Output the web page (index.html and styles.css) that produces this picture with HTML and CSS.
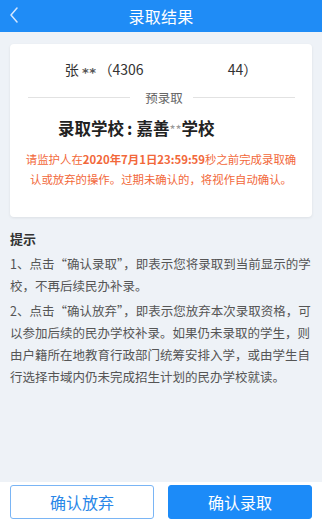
FILE: index.html
```html
<!DOCTYPE html>
<html lang="zh-CN">
<head>
<meta charset="utf-8">
<title>录取结果</title>
<link rel="stylesheet" href="styles.css">
</head>
<body>
<div class="page">
  <header class="topbar">
    <span class="back">
      <svg width="10" height="16" viewBox="0 0 10 16"><polyline points="8,1 2,8 8,15" fill="none" stroke="#d4e7ff" stroke-width="1.5" stroke-linecap="round" stroke-linejoin="round"/></svg>
    </span>
    <h1 class="title">录取结果</h1>
  </header>

  <section class="card">
    <div class="name">张 <span class="ast">**</span>（4306<span class="mask"></span>44）</div>
    <div class="divider"><span class="line"></span><span class="divider-text">预录取</span><span class="line"></span></div>
    <div class="school">录取学校<span class="colon">:</span>嘉善<span class="star">**</span>学校</div>
    <p class="notice">请监护人在<b>2020年7月1日23:59:59</b>秒之前完成录取确<br>认或放弃的操作。过期未确认的，将视作自动确认。</p>
  </section>

  <section class="tips">
    <h2 class="tips-title">提示</h2>
    <p class="tip">1、点击“确认录取”，即表示您将录取到当前显示的学校，不再后续民办补录。</p>
    <p class="tip">2、点击“确认放弃”，即表示您放弃本次录取资格，可以参加后续的民办学校补录。如果仍未录取的学生，则由户籍所在地教育行政部门统筹安排入学，或由学生自行选择市域内仍未完成招生计划的民办学校就读。</p>
  </section>

  <footer class="actions">
    <button class="btn btn-ghost">确认放弃</button>
    <button class="btn btn-primary">确认录取</button>
  </footer>
</div>
</body>
</html>
```

FILE: styles.css
```css
* { box-sizing: border-box; }
html, body { margin: 0; padding: 0; }
body {
  background: #eef2f7;
  font-family: "Noto Sans CJK SC", "Noto Sans", sans-serif;
  color: #333;
}
.page {
  height: 525px;
  display: flex;
  flex-direction: column;
}
.topbar {
  height: 32px;
  background: #1f8cf6;
  display: flex;
  align-items: center;
  justify-content: center;
  position: relative;
  flex-shrink: 0;
}
.back {
  position: absolute;
  left: 9px;
  top: 7px;
  display: flex;
}
.title {
  margin: 0;
  font-size: 16px;
  font-weight: normal;
  color: #fff;
  line-height: 32px;
  letter-spacing: 0.3px;
}
.card {
  margin: 12px 10px 0;
  background: #fff;
  border-radius: 4px;
  box-shadow: 0 1px 3px rgba(0,0,0,0.08);
  padding: 16px 12px 28px;
}
.name {
  text-align: center;
  font-size: 14px;
  line-height: 18px;
  color: #333;
}
.ast {
  font-family: "DejaVu Sans", sans-serif;
  font-size: 13px;
  font-weight: bold;
  vertical-align: -2px;
  color: #555;
  letter-spacing: 0.5px;
  padding-right: 2px;
}
.mask {
  display: inline-block;
  width: 84px;
  height: 14px;
}
.divider {
  margin: 6px 5px 0 6px;
  display: flex;
  align-items: center;
  height: 18px;
}
.line {
  flex: 1;
  height: 1px;
  background: #e2e2e2;
}
.divider-text {
  font-size: 12.5px;
  color: #666;
  padding: 0 10px 0 15px;
}
.school {
  margin-top: 12px;
  padding-left: 36px;
  font-size: 16.5px;
  font-weight: bold;
  line-height: 20px;
  color: #222;
}
.colon {
  padding: 0 4px 0 3px;
}
.star {
  color: #999;
  font-size: 13px;
  font-weight: normal;
}
.notice {
  margin: 9px 0 0;
  text-align: center;
  font-size: 11.4px;
  line-height: 20px;
  color: #f2683a;
}
.notice b { font-weight: bold; }
.tips {
  padding: 12px 10px 0;
}
.tips-title {
  margin: 0;
  font-size: 13px;
  line-height: 20px;
  font-weight: bold;
  color: #333;
}
.tip {
  margin: 4px 0 0;
  font-size: 12.5px;
  line-height: 21.7px;
  color: #555;
}
.actions {
  margin-top: auto;
  background: #fff;
  padding: 3px 10px 6px;
  display: flex;
  gap: 14px;
}
.btn {
  flex: 1;
  height: 34px;
  border-radius: 3px;
  font-family: "Noto Sans CJK SC", "Noto Sans", sans-serif;
  font-size: 16px;
  cursor: pointer;
}
.btn-ghost {
  background: #fff;
  border: 1px solid #7ab5f5;
  color: #2a87e8;
}
.btn-primary {
  background: #1c8bf8;
  border: 1px solid #1c8bf8;
  color: #fff;
}
```
